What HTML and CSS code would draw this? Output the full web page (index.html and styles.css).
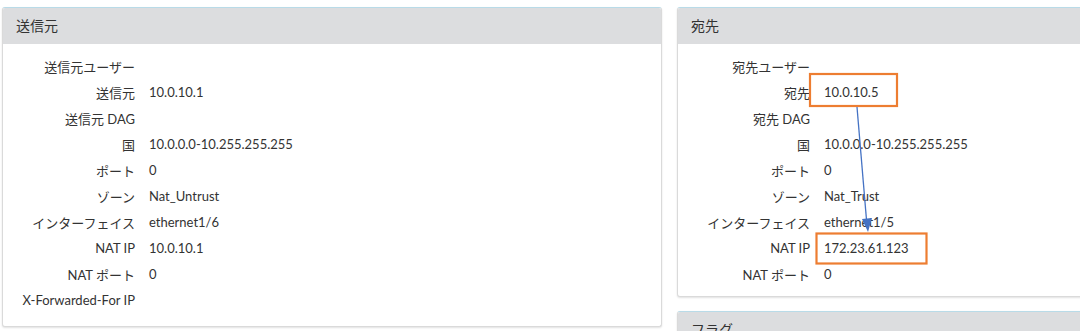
FILE: index.html
```html
<!DOCTYPE html>
<html lang="ja">
<head>
  <meta charset="UTF-8">
  <title>NAT 詳細</title>
  <link rel="stylesheet" href="styles.css">
</head>
<body>
  <div class="page">
    <div class="col col-left">
      <section class="panel">
        <div class="panel-head">送信元</div>
        <div class="panel-body">
          <div class="lbl">送信元ユーザー</div><div class="val"></div>
          <div class="lbl">送信元</div><div class="val">10.0.10.1</div>
          <div class="lbl">送信元 DAG</div><div class="val"></div>
          <div class="lbl">国</div><div class="val">10.0.0.0-10.255.255.255</div>
          <div class="lbl">ポート</div><div class="val">0</div>
          <div class="lbl">ゾーン</div><div class="val">Nat_Untrust</div>
          <div class="lbl">インターフェイス</div><div class="val">ethernet1/6</div>
          <div class="lbl">NAT IP</div><div class="val">10.0.10.1</div>
          <div class="lbl">NAT ポート</div><div class="val">0</div>
          <div class="lbl">X-Forwarded-For IP</div><div class="val"></div>
        </div>
      </section>
    </div>

    <div class="col col-right">
      <section class="panel">
        <div class="panel-head">宛先</div>
        <div class="panel-body tight">
          <div class="lbl">宛先ユーザー</div><div class="val"></div>
          <div class="lbl">宛先</div><div class="val">10.0.10.5</div>
          <div class="lbl">宛先 DAG</div><div class="val"></div>
          <div class="lbl">国</div><div class="val">10.0.0.0-10.255.255.255</div>
          <div class="lbl">ポート</div><div class="val">0</div>
          <div class="lbl">ゾーン</div><div class="val">Nat_Trust</div>
          <div class="lbl">インターフェイス</div><div class="val">ethernet1/5</div>
          <div class="lbl">NAT IP</div><div class="val">172.23.61.123</div>
          <div class="lbl">NAT ポート</div><div class="val">0</div>
        </div>
      </section>
      <section class="panel">
        <div class="panel-head">フラグ</div>
      </section>
    </div>

    <!-- annotation: highlighted boxes + arrow -->
    <svg class="marks" width="1080" height="331" viewBox="0 0 1080 331">
      <rect x="810" y="74" width="87" height="32" fill="none" stroke="#ed7d31" stroke-width="2.2"/>
      <rect x="816.5" y="233.5" width="110" height="30" fill="none" stroke="#ed7d31" stroke-width="2.2"/>
      <line x1="857" y1="107" x2="866.5" y2="220" stroke="#4472c4" stroke-width="1.3"/>
      <path d="M862,219 L872,218 L868,232 Z" fill="#4472c4"/>
    </svg>
  </div>
</body>
</html>
```

FILE: styles.css
```css
body {
  margin: 0;
  background: #fff;
  overflow: hidden;
  font-family: Lato, "Noto Sans CJK JP", sans-serif;
  color: #333;
}
.page {
  position: relative;
  display: flex;
  align-items: flex-start;
  gap: 15px;
  padding: 7px 0 0 2px;
  width: 1200px;
  height: 331px;
  box-sizing: border-box;
}
.col { display: flex; flex-direction: column; gap: 14px; }
.col-left { width: 660px; }
.col-right { width: 440px; }

.panel {
  flex-shrink: 0;
  background: #fff;
  border: 1px solid #dadada;
  border-top: 1px solid #b9dbe8;
  border-radius: 3px;
  box-shadow: 0 1px 2px rgba(0,0,0,0.12);
  overflow: hidden;
}
.panel-head {
  background: #dcdddf;
  height: 36px;
  line-height: 36px;
  padding-left: 13px;
  font-size: 14px;
  color: #333;
}
.panel-body {
  display: grid;
  grid-template-columns: 125px 1fr;
  grid-auto-rows: 26px;
  column-gap: 14px;
  padding: 9px 10px 13px 7px;
  font-size: 13px;
  align-items: center;
}
.panel-body.tight { padding-bottom: 9px; }
.lbl { text-align: right; white-space: nowrap; }
.val { white-space: nowrap; }

.marks {
  position: absolute;
  left: 0;
  top: 0;
  pointer-events: none;
}
```
